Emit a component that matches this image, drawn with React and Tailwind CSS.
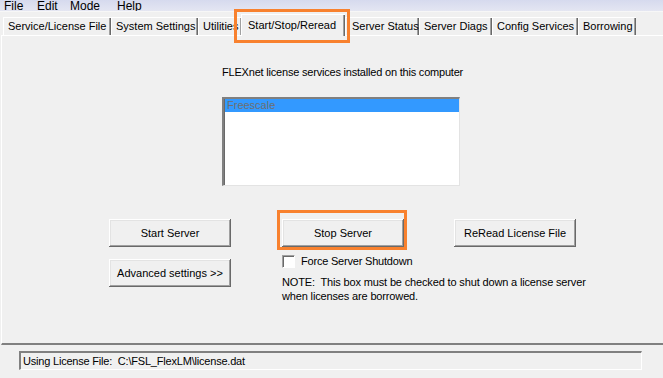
import React from "react";

const raised =
  "shadow-[inset_-1px_-1px_0_#696969,inset_1px_1px_0_#ffffff,inset_-2px_-2px_0_#a0a0a0,inset_2px_2px_0_#e3e3e3]";

function Tab({ label, w, pl = "pl-[4px]" }) {
  return (
    <div
      className={`h-[18px] ${w} shrink-0 border-l border-t border-white shadow-[inset_-1px_0_0_#696969,inset_-2px_0_0_#a0a0a0] flex items-center ${pl} overflow-hidden whitespace-nowrap`}
    >
      <span className="leading-[13px]">{label}</span>
    </div>
  );
}

function Button({ children, className = "" }) {
  return (
    <div
      className={`h-[28px] w-[122px] shrink-0 bg-[#f0f0f0] ${raised} flex items-center justify-center whitespace-nowrap ${className}`}
    >
      {children}
    </div>
  );
}

export default function App() {
  return (
    <div
      className="relative w-[663px] h-[378px] overflow-hidden bg-[#f0f0f0] text-[11px] text-black"
      style={{ fontFamily: '"Liberation Sans", Arial, sans-serif' }}
    >
      {/* Menu bar */}
      <div className="h-[12px] bg-gradient-to-b from-[#d6daee] to-[#e4e6f2] border-b border-[#f7f7f7] flex items-end overflow-hidden">
        <div className="flex pl-[4px] text-[12px] leading-[14px] -mb-[2px]">
          <span className="w-[33px]">File</span>
          <span className="w-[33px]">Edit</span>
          <span className="w-[47px]">Mode</span>
          <span>Help</span>
        </div>
      </div>

      {/* Tab strip */}
      <div className="h-[23px] flex items-end pl-[3px]">
        <Tab label="Service/License File" w="w-[108px]" />
        <Tab label="System Settings" w="w-[87px]" />
        <Tab label="Utilities" w="w-[44px]" />
        <div className="relative z-10 -ml-[1px] translate-y-[1px] h-[22px] w-[104px] shrink-0 bg-[#f0f0f0] border-l border-t border-white shadow-[inset_-1px_0_0_#696969,inset_-2px_0_0_#a0a0a0] flex items-center pl-[6px] pb-[1px] whitespace-nowrap">
          <span className="leading-[13px]">Start/Stop/Reread</span>
        </div>
        <Tab label="Server Status" w="w-[74px]" pl="pl-[6px]" />
        <Tab label="Server Diags" w="w-[73px]" />
        <Tab label="Config Services" w="w-[86px]" />
        <Tab label="Borrowing" w="w-[58px]" />
      </div>

      {/* Panel */}
      <div className="ml-[1px] w-[700px] h-[310px] border-t border-l border-white border-b-2 border-b-[#808080] flex flex-col">
        <div className="ml-[220px] mt-[30px] leading-[13px] tracking-[-0.2px] whitespace-nowrap">
          FLEXnet license services installed on this computer
        </div>
        <div className="ml-[220px] mt-[18px] w-[238px] h-[89px] bg-white border-l-2 border-t-2 border-l-[#808080] border-t-[#808080] border-r border-b border-r-[#e3e3e3] border-b-[#e3e3e3] shadow-[inset_1px_1px_0_#696969]">
          <div className="ml-[1px] h-[13px] bg-[#3399ff] text-[#6f6f6f] leading-[13px] pl-[2px]">
            Freescale
          </div>
        </div>

        <div className="ml-[107px] mt-[33px] flex">
          <div className="w-[122px] shrink-0 flex flex-col">
            <Button>Start Server</Button>
            <Button className="mt-[12px]">Advanced settings &gt;&gt;</Button>
          </div>
          <div className="ml-[51px] w-[122px] shrink-0 flex flex-col">
            <Button>Stop Server</Button>
            <div className="mt-[8px] flex items-center whitespace-nowrap">
              <div className="w-[13px] h-[13px] shrink-0 bg-white border-l border-t border-[#a0a0a0] shadow-[inset_1px_1px_0_#696969] border-r border-b border-r-white border-b-white" />
              <span className="ml-[6px] leading-[13px] tracking-[-0.2px]">Force Server Shutdown</span>
            </div>
            <div className="mt-[7px] leading-[14px] whitespace-pre tracking-[-0.15px]">
              {"NOTE:  This box must be checked to shut down a license server\nwhen licenses are borrowed."}
            </div>
          </div>
          <div className="ml-[50px] w-[122px] shrink-0">
            <Button>ReRead License File</Button>
          </div>
        </div>
      </div>

      {/* Status field */}
      <div className="ml-[19px] mt-[6px] w-[623px] h-[19px] border-l-2 border-t-2 border-l-[#808080] border-t-[#808080] border-r border-b border-r-white border-b-white flex items-center pl-[2px]">
        <span className="leading-[13px] tracking-[-0.2px] whitespace-pre">
          {"Using License File:  C:\\FSL_FlexLM\\license.dat"}
        </span>
      </div>

      {/* Annotation boxes */}
      <div className="absolute left-[234px] top-[9px] w-[116px] h-[34px] border-[3px] border-[#f8812e] z-20" />
      <div className="absolute left-[277px] top-[210px] w-[130px] h-[40px] border-[3px] border-[#f8812e] z-20" />
    </div>
  );
}
